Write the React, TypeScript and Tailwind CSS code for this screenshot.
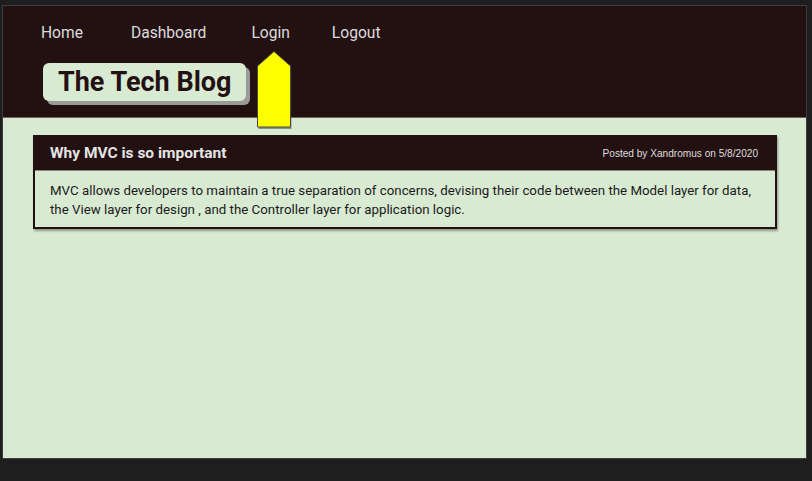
import React from 'react';

const POST = {
  title: 'Why MVC is so important',
  author: 'Xandromus',
  date: '5/8/2020',
  body: 'MVC allows developers to maintain a true separation of concerns, devising their code between the Model layer for data, the View layer for design , and the Controller layer for application logic.',
};

export default function App() {
  return (
    <div className="w-[812px] h-[481px] bg-[#1e1e1e] pl-[2px] pt-[5px] font-['Roboto',sans-serif]">
      <div className="relative w-[805px] h-[454px] border border-[#3d3d3d] bg-[#d9ead3] flex flex-col">
        {/* Header */}
        <header className="h-[112px] bg-[#231112] border-b border-[#6b6360] pl-[38px] pt-[18px]">
          <nav className="flex text-[15.6px] text-[#dcdcdc] leading-[19px]">
            <a className="mr-[48px]">Home</a>
            <a className="mr-[45px]">Dashboard</a>
            <a className="mr-[42px]">Login</a>
            <a>Logout</a>
          </nav>
          <div className="mt-[20px] ml-[2px] inline-block rounded-[6px] bg-[#d9ead3] px-[15px] h-[38px] leading-[38px] text-[27px] font-bold text-[#231112] shadow-[4px_4px_0_#9a9a9a]">
            The Tech Blog
          </div>
        </header>

        {/* Arrow pointing to Login */}
        <svg
          className="absolute left-[251px] top-[44px]"
          width="38"
          height="80"
          viewBox="0 0 38 80"
        >
          <polygon points="3.5,78 3.5,17 20,2 36.5,17 36.5,78" fill="#3a3a3a" opacity="0.5" transform="translate(1,1)" />
          <polygon points="3.5,77 3.5,16 20,1.5 36.5,16 36.5,77" fill="#ffff00" stroke="#4a4a3a" strokeWidth="1" />
        </svg>

        {/* Posts */}
        <main className="px-[30px] pt-[17px]">
          <article className="w-[744px] border-2 border-[#231112] shadow-[1px_2px_2px_rgba(0,0,0,0.35)]">
            <div className="h-[33px] bg-[#231112] flex items-center justify-between pl-[15px] pr-[17px]">
              <h2 className="text-[15.5px] font-bold text-[#e4e4e4]">{POST.title}</h2>
              <span className="text-[10.1px] text-[#dedede] font-['Liberation_Sans',sans-serif]">
                Posted by {POST.author} on {POST.date}
              </span>
            </div>
            <p className="bg-[#d9ead3] border-t border-[#8a8582] px-[15px] pt-[10px] pb-[8px] text-[13.3px] leading-[19px] text-[#1a1a1a]">
              {POST.body}
            </p>
          </article>
        </main>
      </div>
    </div>
  );
}
